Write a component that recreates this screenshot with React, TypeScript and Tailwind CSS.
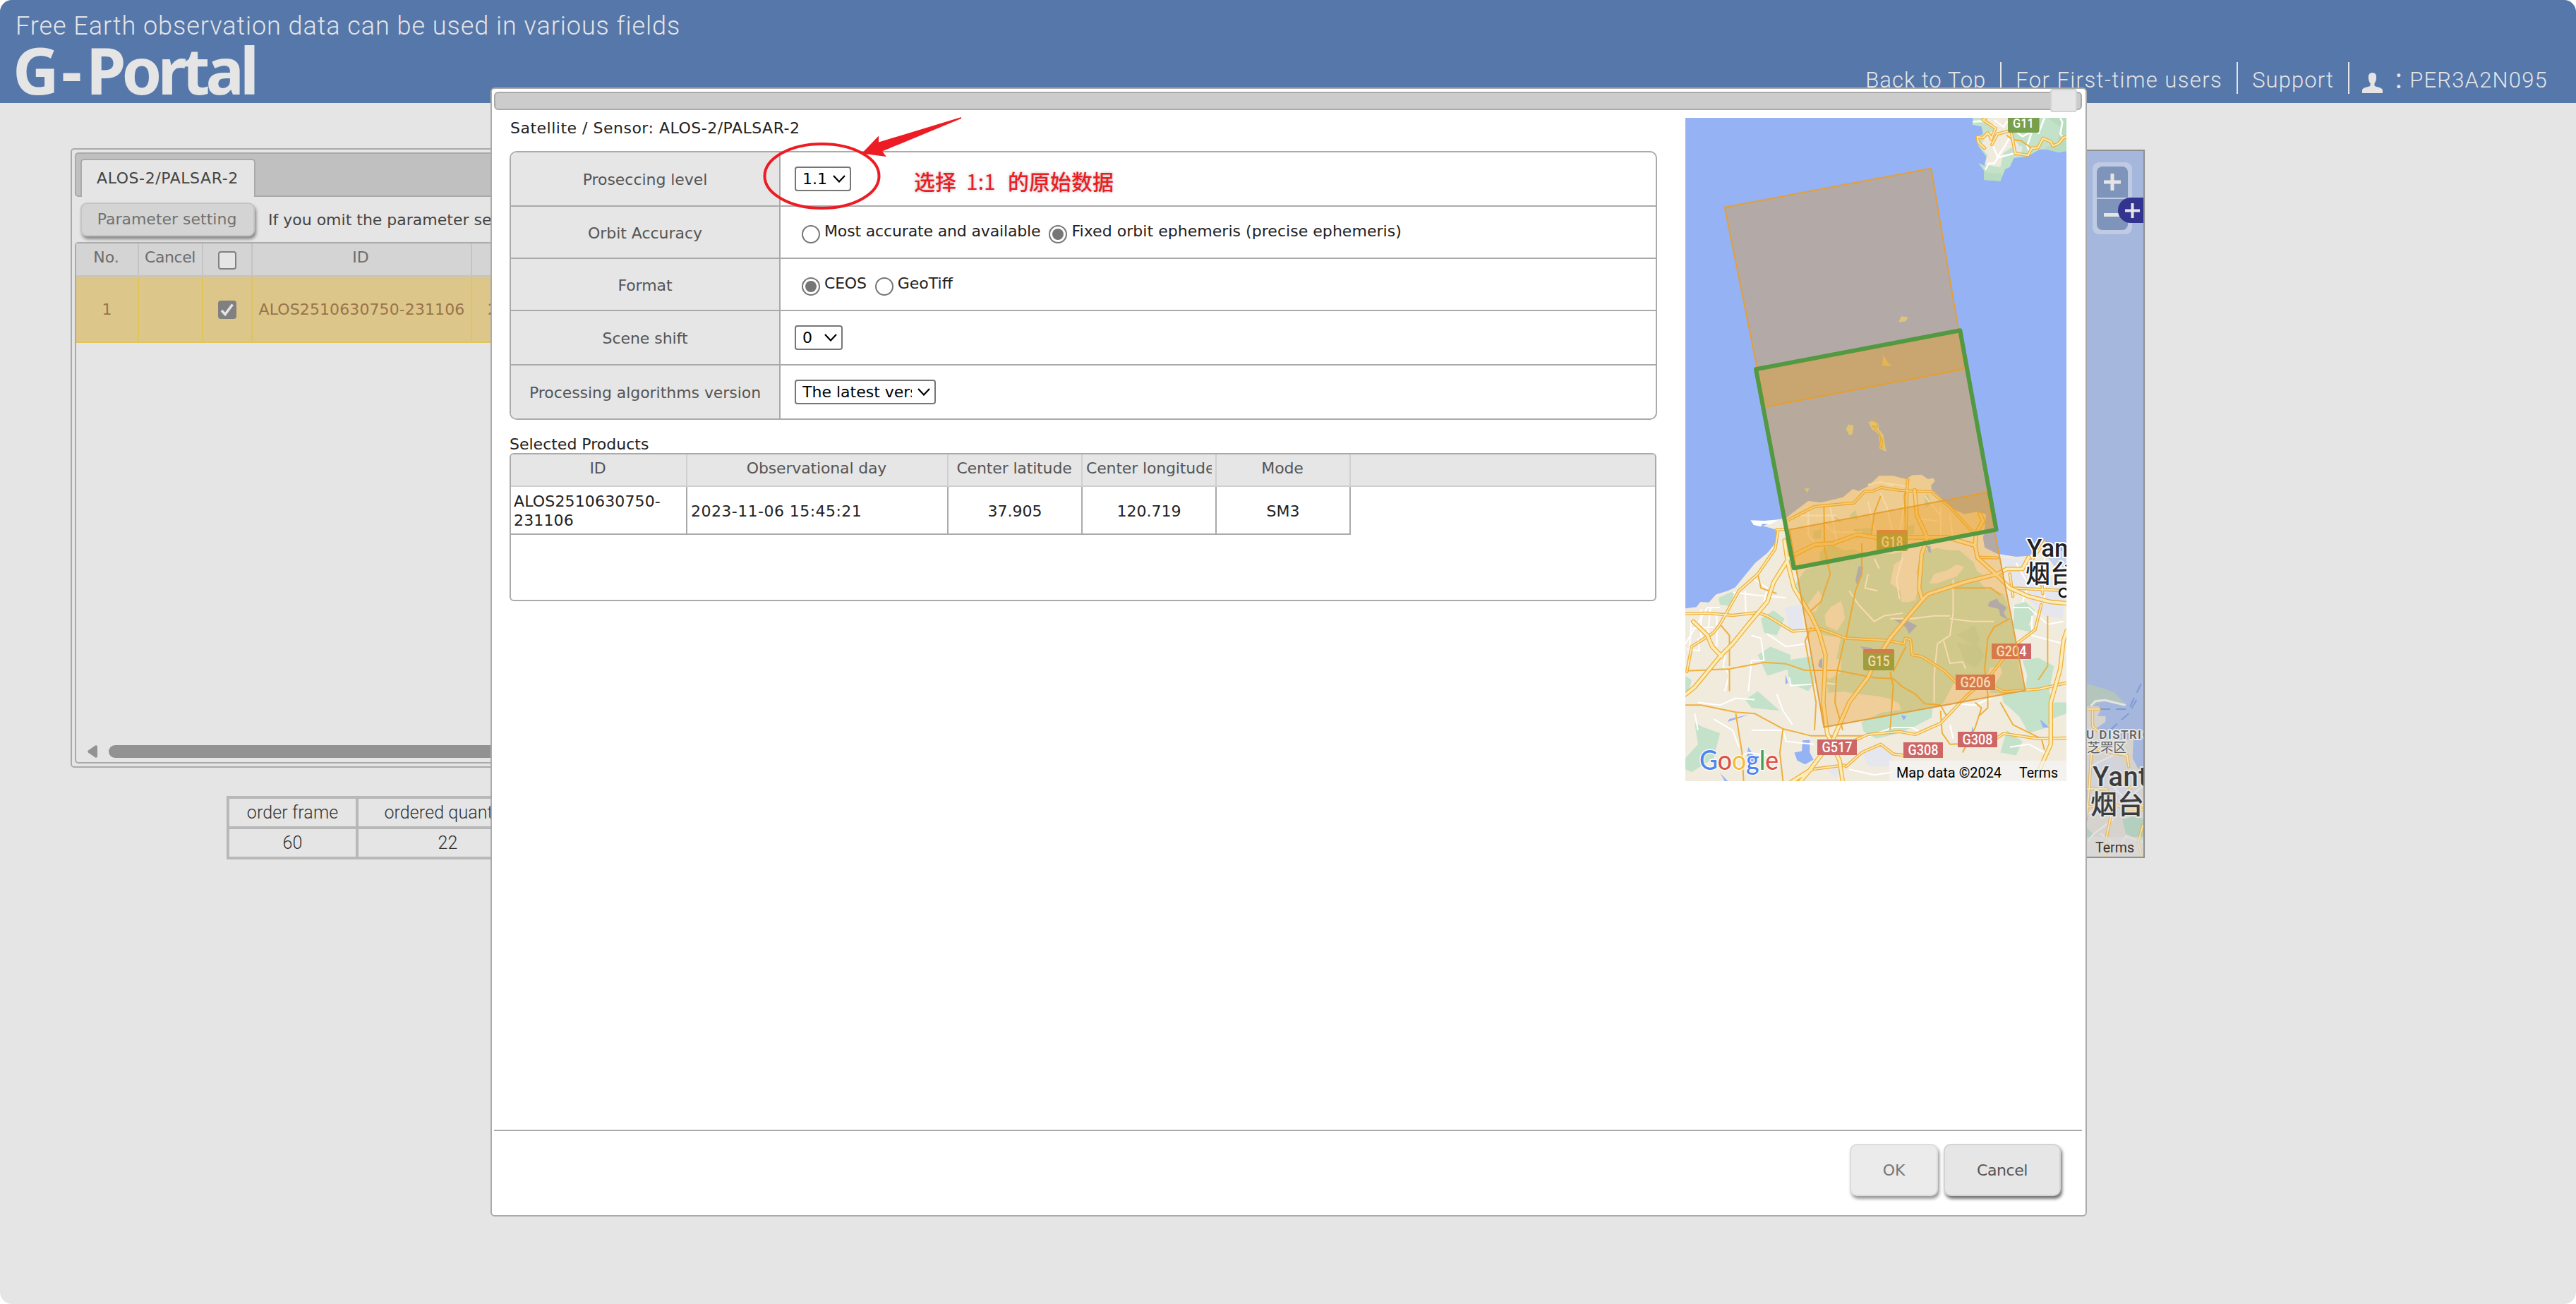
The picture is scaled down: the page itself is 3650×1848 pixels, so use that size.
import type { ReactNode } from 'react';

const VERDANA = "font-['DejaVu_Sans',Verdana,sans-serif] text-[22px]";
const LIGHT = "font-[Roboto,'Noto_Sans_CJK_JP',sans-serif] font-light";

function Header() {
  return (
    <header className="flex h-[146px] justify-between bg-[#5577aa] text-[#e5e5e5]">
      <div className="pl-[22px] pt-[19px]">
        <p className={`${LIGHT} text-[36px] leading-[36px] tracking-[0.95px]`}>
          Free Earth observation data can be used in various fields
        </p>
        <h1 className="-ml-[4px] -mt-[2px] flex gap-[6px] font-['Noto_Sans',sans-serif] text-[91px] font-bold leading-[92px]">
          <span className="-mr-[3px]">G</span>
          <span>-</span>
          <span className="tracking-[-6px]">Portal</span>
        </h1>
      </div>
      <nav className={`${LIGHT} mr-[40px] mt-[88px] flex h-[45px] text-[31px] leading-[51px]`}>
        <span className="pr-[20px] tracking-[1px]">Back to Top</span>
        <span className="border-l-2 border-[#e5e5e5] px-[20px] tracking-[1.4px]">For First-time users</span>
        <span className="border-l-2 border-[#e5e5e5] px-[20px] tracking-[1.1px]">Support</span>
        <span className="flex border-l-2 border-[#e5e5e5] pl-[18px]">
          <svg className="mt-[15px] h-[29px] w-[29px]" viewBox="0 0 29 29" fill="#e5e5e5">
            <path d="M14.5 0C9.500 0 8.500 4 9 8.500c.3 3 1.200 5 2.500 6.500v3.500C9.500 20.500 1 20.500 0 24.500V29h29v-4.500c-1-4-9.500-4-11.500-6V15c1.300-1.500 2.200-3.500 2.500-6.500C20.500 4 19.500 0 14.500 0Z" />
          </svg>
          <span className="w-[38px] pl-[7px] font-['Noto_Sans_CJK_JP',sans-serif] font-normal leading-[49px]">：</span>
          <span className="tracking-[1.2px]">PER3A2N095</span>
        </span>
      </nav>
    </header>
  );
}

function CheckBox({ checked = false }: { checked?: boolean }) {
  return checked ? (
    <span className="flex size-[26px] items-center justify-center rounded-[4px] bg-[#808080]">
      <svg viewBox="0 0 26 26" className="size-[26px]" fill="none" stroke="#e5e5e5" strokeWidth="3.600">
        <path d="M5 14l5 5.500L20.500 5.500" />
      </svg>
    </span>
  ) : (
    <span className="block size-[26px] rounded-[4px] border-2 border-[#808080] bg-[#e5e5e5]" />
  );
}

function OrderPanel() {
  const columns = 'grid grid-cols-[89px_91px_70px_311px_1fr]';
  return (
    <section className="flex h-[878px] w-[1900px] flex-col rounded-[5px] border-2 border-[#aaa] p-[4px]">
      <div className="h-[63px] shrink-0 rounded-[5px] border-2 border-[#aaa] bg-[#c0c0c0] pl-[6px] pt-[7px]">
        <div
          className={`${VERDANA} h-[54px] w-[248px] rounded-t-[5px] border-2 border-b-0 border-[#aaa] bg-[#e5e5e5] pl-[21px] leading-[52px] tracking-[0.58px] text-[#444]`}
        >
          ALOS-2/PALSAR-2
        </div>
      </div>
      <div className="flex h-[64px] shrink-0 gap-[19px] pl-[8px] pt-[8px]">
        <button
          className={`${VERDANA} h-[48px] w-[247px] whitespace-nowrap rounded-[9px] border-2 border-[#c4c4c4] bg-[#d4d4d4] pr-[2px] leading-[44px] text-[#717171] shadow-[2px_4px_4px_rgba(0,0,0,0.4)]`}
        >
          Parameter setting
        </button>
        <span className={`${VERDANA} leading-[50px] text-[#444]`}>
          If you omit the parameter setting, the default value is used.
        </span>
      </div>
      <div className={`${VERDANA} flex grow flex-col rounded-[5px] border-2 border-[#aaa]`}>
        <div className={`${columns} h-[47px] border-b-2 border-[#c4c4c4] bg-[#d4d4d4] text-center leading-[39px] text-[#6c6c6c]`}>
          <span className="border-r-2 border-[#c4c4c4] pr-[2px]">No.</span>
          <span className="border-r-2 border-[#c4c4c4] pr-[1px] tracking-[-0.4px]">Cancel</span>
          <span className="flex justify-center border-r-2 border-[#c4c4c4] pt-[11px]">
            <CheckBox />
          </span>
          <span className="border-r-2 border-[#c4c4c4] pr-[3px]">ID</span>
          <span />
        </div>
        <div className={`${columns} h-[94px] border-b-2 border-[#e0c45c] bg-[#ddc68a] text-center leading-[94px] text-[#98744a]`}>
          <span className="border-r-2 border-[#e0c45c]">1</span>
          <span className="border-r-2 border-[#e0c45c]" />
          <span className="flex justify-center border-r-2 border-[#e0c45c] pt-[34px]">
            <CheckBox checked />
          </span>
          <span className="border-r-2 border-[#e0c45c] tracking-[0.1px]">ALOS2510630750-231106</span>
          <span className="pl-[22px] text-left">2023-11-06 15:45:21</span>
        </div>
        <div className="mt-auto flex items-center gap-[16px] pb-[6px] pl-[16px]">
          <svg viewBox="0 0 14 18" className="h-[18px] w-[14px]" fill="#929292">
            <path d="M1 7.500L11 .5Q14-.5 14 2.500V15.500Q14 18.500 11 17.500L1 10.500Q-.5 9 1 7.500Z" />
          </svg>
          <div className="h-[18px] grow rounded-full bg-[#929292]" />
        </div>
      </div>
    </section>
  );
}

function QuantityTable() {
  return (
    <div
      className={`${LIGHT} ml-[221px] mt-[40px] grid w-[900px] grid-cols-[179px_253px_1fr] gap-[4px] border-4 border-[#b8b8b8] bg-[#b8b8b8] text-center text-[25px] leading-[39px] tracking-[0.1px] text-[#333] *:h-[39px] *:bg-[#e5e5e5]`}
    >
      <span>order frame</span>
      <span>ordered quantity</span>
      <span>remaining quantity</span>
      <span>60</span>
      <span>22</span>
      <span>38</span>
    </div>
  );
}

function Roads({ d, w = 5 }: { d: string; w?: number }) {
  return (
    <g fill="none" strokeLinejoin="round" strokeLinecap="round">
      <path d={d} stroke="#efb03c" strokeWidth={w} vectorEffect="non-scaling-stroke" />
      <path d={d} stroke="#fdecb4" strokeWidth={w - 2.6} vectorEffect="non-scaling-stroke" />
    </g>
  );
}

function Line({ d, c, w = 2 }: { d: string; c: string; w?: number }) {
  return <path d={d} fill="none" stroke={c} strokeWidth={w} strokeLinejoin="round" vectorEffect="non-scaling-stroke" />;
}

function BackgroundMap() {
  return (
    <section className="relative mt-[2px] h-[1004px] w-[902px] border-2 border-[#909090] bg-[#a5b7dd]">
      <svg viewBox="2140 214 898 1000" className="h-full w-full">
        <g transform="translate(2370 600) scale(.4464 .3954)">
          <path d="M1200 925L1315 932 1370 950 1405 965 1440 1005 1435 1014 1370 995 1335 1012 1200 1012Z" fill="#b3c5bd" />
          <path
            d="M1200 1012L1355 1014 1360 1030 1350 1048 1377 1050 1376 1070 1350 1090 1366 1130 1465 1135 1462 1200 1480 1238 1500 1242 1500 1560 1200 1560Z"
            fill="#d6d3ce"
          />
          <path d="M1200 1210L1420 1205 1450 1300 1490 1330 1430 1400 1200 1420Z" fill="#d1d4dc" />
          <path d="M1430 1420L1470 1405 1500 1420 1500 1500 1440 1470Z M1310 1440L1335 1470 1315 1500Z" fill="#b3cfbf" />
          <Line d="M1330 1012L1345 995 1375 992 1440 1010" c="#e4e4e2" w={3} />
          <Line d="M1320 1400L1360 1370 1400 1420 1340 1470 1320 1500M1360 1470L1420 1520 1440 1480 1495 1500M1400 1300L1440 1350 1495 1300M1325 1230L1400 1190" c="#e6e4e4" />
          <g opacity=".75">
            <Roads d="M1300 1024L1358 1024M1335 1030L1335 1085 1360 1110M1300 1160L1340 1165 1400 1180 1445 1190 1450 1230M1332 1170L1325 1300 1315 1420M1315 1310L1380 1310 1400 1360 1440 1385 1495 1385M1460 1300L1430 1350 1495 1370M1315 1375L1400 1370 1380 1480 1375 1550M1495 1440L1480 1500 1490 1550" w={4.400} />
          </g>
          <path d="M1360 1024L1450 1024 1495 920M1390 1100L1450 1040 1475 990" fill="none" stroke="#7f9ad6" strokeWidth="2" strokeDasharray="14 8" vectorEffect="non-scaling-stroke" />
        </g>
        <rect x="2957" y="1186" width="90" height="30" fill="#dcdcdc" opacity=".6" />
        <g stroke="#e5e5e5" strokeWidth="4" paintOrder="stroke" strokeLinejoin="round" className="font-[Roboto,'Noto_Sans_CJK_SC',sans-serif]">
          <text x="2957" y="1047" fontSize="17" fontWeight="500" fill="#5d5f63" letterSpacing="1.500">U DISTRICT</text>
          <text x="2958" y="1066" fontSize="18.700" fill="#5d5f63">芝罘区</text>
          <text x="2966" y="1114" fontSize="38" fontWeight="500" fill="#3c3c3e" letterSpacing="0.600">Yantai</text>
          <text x="2963" y="1153" fontSize="38" fontWeight="500" fill="#3c3c3e">烟台</text>
        </g>
        <text x="2970" y="1208" fontSize="20" textLength="55" lengthAdjust="spacingAndGlyphs" fill="#333" className="font-[Roboto,sans-serif]">Terms</text>
      </svg>
      <div className="absolute left-[826px] top-[16px] flex h-[102px] w-[56px] flex-col gap-[2px] rounded-[9px] bg-[#bfcae3] p-[6px]">
        <span className="flex h-[44px] items-center justify-center rounded-t-[8px] bg-[#7f94bb]">
          <svg viewBox="0 0 24 24" className="size-[24px]" fill="#e5e5e5"><path d="M9.500 0h5v9.500H24v5h-9.500V24h-5v-9.500H0v-5h9.500Z" /></svg>
        </span>
        <span className="flex h-[44px] items-center rounded-b-[8px] bg-[#7f94bb] pl-[10px]">
          <span className="h-[5px] w-[22px] bg-[#e5e5e5]" />
        </span>
      </div>
      <div className="absolute right-0 top-[66px] flex h-[36px] w-[36px] items-center justify-center rounded-l-[18px] bg-[#333390]">
        <svg viewBox="0 0 21 21" className="ml-[4px] size-[21px]" fill="#e5e5e5"><path d="M8.500 0h4v8.500H21v4h-8.500V21h-4v-8.500H0v-4h8.500Z" /></svg>
      </div>
    </section>
  );
}

function Shield({ x, y, w, h, text, green = false }: { x: number; y: number; w: number; h: number; text: string; green?: boolean }) {
  return (
    <g>
      <rect x={x} y={y} width={w} height={h} rx={green ? 3 : 0} fill={green ? '#779f4c' : '#cd6664'} />
      {green && <path d={`M${x} ${y + 5}v-2q0-3 3-3h${w - 6}q3 0 3 3v2Z`} fill="#cd6664" />}
      <text x={x + w / 2} y={y + h - (green ? 6 : 4)} textAnchor="middle" fontSize="20" fontWeight="500" textLength={w - 13} lengthAdjust="spacingAndGlyphs" fill="#fff" className="font-[Roboto,sans-serif]">
        {text}
      </text>
    </g>
  );
}

const GOOGLE: [string, string][] = [
  ['G', '#4f86ee'], ['o', '#dd5044'], ['o', '#f3bd3d'], ['g', '#4f86ee'], ['l', '#3fa35b'], ['e', '#dd5044'],
];

function SceneMap() {
  return (
    <svg viewBox="0 0 540 940" className="h-[940px] w-[540px] shrink-0 bg-[#94b2f4]">
      <g transform="translate(-17.860 -57) scale(.4464 .3333)">
        <path d="M953 171L951 200 980 208 985 240 965 250 970 290 995 335 990 375 970 363 988 395 988 435 1040 440 1055 390 1070 380 1083 342 1125 335 1165 305 1185 305 1225 318 1250 312 1250 171Z" fill="#c3e2c9" />
        <path d="M1190 171L1230 210 1220 280 1180 300 1225 318 1250 312 1250 171Z M1000 405L1045 408 1040 440 988 435 988 400Z" fill="#b8dcc0" />
        <path d="M990 171L1075 171 1070 240 1100 290 1072 300 1050 320 1040 380 990 370 1000 330 975 290 1000 240 1020 220Z" fill="#f1ebde" />
        <path d="M1088 292L1110 292 1108 320 1085 312Z" fill="#e6e7ee" />
        <Line d="M953 187L985 185 1030 208M1020 180L1050 210 1062 185M1015 285L1032 340 1085 322M1032 340L1020 365 1003 365 992 392M1075 240L1055 290 1032 335M1160 240L1180 171M1230 171L1237 190 1230 240 1240 255M1090 230L1110 250 1140 230 1125 290 1130 310" c="#fff" w={2.600} />
        <Line d="M1060 245L1080 265 1105 268 1140 300" c="#efb03c" />
        <Roads d="M1013 285L1030 240 1065 228M1010 262L1025 215 985 180 995 171M990 300L970 275 967 252 985 255 1000 235 1013 260M1075 235L1087 322 1128 330 1140 300 1160 298 1175 258 1200 272 1207 290 1225 280 1240 255 1250 252" w={4.600} />
        <path d="M717 1040L725 1015 747 1018 740 1036Z M665 1225L668 1178 682 1210 697 1227Z M550 1500L557 1475 573 1478 573 1500Z M620 1464L651 1468 654 1500 634 1498Z" fill="#d3dbb0" />
      </g>
      <rect x="457" y="-5" width="44.500" height="26" rx="3" fill="#779f4c" />
      <text x="479" y="14" textAnchor="middle" fontSize="19" fontWeight="500" textLength="30" lengthAdjust="spacingAndGlyphs" fill="#fff" className="font-[Roboto,sans-serif]">G11</text>

      <g transform="translate(-17.860 433) scale(.4464 .3954)">
        <path
          d="M40 663L75 658 88 640 115 642 137 613 175 600 198 588 240 530 262 500 300 465 325 430 332 400 325 380 300 372 285 368 345 343 362 338 375 325 430 278 470 284 540 265 572 235 590 243 620 225 655 188 700 188 740 200 760 186 790 184 810 200 828 196 832 208 820 222 822 238 850 265 875 300 925 325 965 317 995 325 990 375 985 410 990 445 1030 467 1090 478 1130 475 1155 455 1175 422 1190 430 1205 455 1250 460 1250 1290 40 1290Z"
          fill="#f1ebde"
        />
        <path d="M247 347L290 349 330 345 345 342 325 352 310 362 285 360 280 370 257 364Z" fill="#fff" />
        <path d="M550 20L558 6 573 8 570 40 560 42Z M628 -10L652 0 654 20 668 40 678 102 656 90 655 42 630 15Z M419 233L434 233 426 248Z" fill="#d8dcae" />
        <Line d="M630 -15L648 -5 650 15 632 8 655 35 660 50 657 80 664 90 666 60 658 45" c="#efb03c" w={1.300} />
      </g>
      <g transform="translate(-8 503) scale(.35714 .33333)">
        <path
          d="M455 480L500 410 560 395 555 340 600 300 650 330 690 325 720 340 850 345 880 335 880 370 850 390 835 470 875 500 880 550 910 550 935 540 945 490 940 420 960 320 990 330 1020 320 1070 330 1110 330 1165 380 1180 420 1230 450 1270 480 1300 560 1335 740 1350 850 1370 918 1290 938 1230 935 1280 850 1270 820 1230 830 1220 870 1170 900 1090 890 1045 980 980 1010 880 1010 870 980 830 960 790 950 700 940 650 930 590 935 580 880 610 850 640 700 570 690 480 560Z"
          fill="#c3e2c9"
        />
        <path
          d="M990 470L1010 430 1060 415 1100 390 1130 400 1100 440 1020 470Z M1180 450L1250 430 1290 480 1290 520 1230 490 1220 500Z M575 605L600 570 640 545 650 580 655 620 625 672 580 650Z M508 560L550 500 570 530 540 590 520 590Z M500 700L560 670 575 780 545 850 520 790Z M590 800L640 790 640 850 590 880Z"
          fill="#f1ebde"
        />
        <path d="M1170 650L1190 700 1180 740 1140 720 1100 690Z M1100 720L1190 740 1210 780 1170 830 1130 800Z M1380 810L1430 790 1440 830 1400 850Z" fill="#b8dcc0" />
        <path d="M720 1060L800 1020 930 1000 1005 990 1000 1040 930 1080 860 1110 780 1130 730 1100Z M690 240L760 235 760 270 700 280Z M530 250L560 240 560 280 530 280Z M890 230L930 220 930 260 900 265Z M970 100L985 90 1000 130 975 150Z" fill="#c3e2c9" />
      </g>
      <g transform="translate(-17.860 433) scale(.4464 .3954)">
        <path
          d="M1085 650L1120 640 1150 670 1130 720 1145 750 1080 735Z M1110 850L1160 840 1210 870 1195 960 1210 1010 1190 1090 1130 1110 1100 1050 1050 1000 1045 975 1120 955 1125 900Z M145 625L195 600 185 655 150 650Z M280 700L320 670 355 700 330 760 290 750Z M270 830L310 800 375 830 370 880 300 905Z M70 1075L100 1090 150 1110 130 1200 60 1250 40 1240 40 1200 80 1150Z M230 990L270 960 340 1030 250 1020Z M360 850L440 835 450 930 430 960 370 930Z M40 905L60 920 50 960 40 960Z M1180 1000L1250 1000 1250 1040 1200 1060Z M1060 1100L1110 1140 1090 1190 1040 1180Z M560 330L580 310 590 350Z"
          fill="#c3e2c9"
        />
        <path d="M355 660L410 650 415 740 370 740Z M1040 480L1110 490 1140 560 1100 600 1070 560Z M600 1180L650 1150 700 1180 690 1230 620 1230Z M470 1230L530 1220 520 1270Z M1120 560L1240 560 1240 700 1180 690 1120 620Z" fill="#e6e7ee" />
        <path
          d="M412 1136L435 1135 435 1180 447 1205 420 1222 395 1208 386 1180 410 1175Z M590 512L605 512 600 550 585 580 580 560Z M1005 640L1030 628 1035 640 1060 660 1050 680 1065 705 1040 690 1035 665 1000 655Z M700 702L740 705 775 725 750 755 740 730Z M725 1045L742 1050 733 1065Z M150 1253L175 1282 165 1282Z M180 1060L240 1043 220 1052 175 1070Z M240 1160L262 1200 250 1220 235 1190Z M358 900L366 930 358 935Z M465 850L475 840 475 880 462 870Z M1165 1060L1195 1090 1175 1090Z M806 440L818 440 820 465 812 460Z M950 1085L957 1110 948 1115Z M595 800L635 805 620 830Z M510 330L535 355 525 350Z"
          fill="#94b2f4"
        />
        <path d="M1170 425L1240 455 1250 455 1250 520 1210 510 1190 480Z" fill="#a9c1f5" opacity=".6" />
        <Line
          d="M40 790L110 660 150 660M90 665L90 770M120 660L110 770M60 735L130 730M45 810L85 815 80 770M60 700L50 860M140 680L140 800M190 605L260 615 360 625M230 600L232 680M260 560L300 590 290 640M170 800L160 870 180 900 165 960M250 760L280 770 290 850 250 850 240 960M300 755L360 800 420 790M80 1000L150 1010 200 985 260 990M130 1060L190 1100 210 1160M370 910L375 940 440 935M330 970L350 1030 380 1080M250 1100L350 1100 360 1140 450 1150M200 1200L240 1180 300 1190M70 1040L80 1100M560 600L590 650 640 710 670 690 730 680M620 540L610 590 650 600M730 480L710 560 720 630M640 485L655 520M690 700L760 700 830 690 880 690M890 560L890 680 880 760 840 790 830 900 830 1000M880 700L950 710 1020 710M860 780L880 860 920 855 930 880M480 360L510 390 600 390M620 280L640 380M660 250L680 300 700 400M740 250L720 400M400 330L520 330M430 300L430 400 460 440M500 300L520 420M850 300L850 400M880 330L890 420M800 260L850 330M620 220L660 210 700 225M680 215L740 225M1080 660L1130 660 1190 720 1240 710M1140 690L1140 760 1240 790M1010 985L960 1010 900 1005M880 1080L890 1130M600 1130L700 1090 760 1090 790 1110M1070 1160L1130 1150 1180 1180M560 1240L640 1260 700 1250M1090 500L1130 580 1110 640M1130 540L1250 540M1180 480L1180 640M480 930L520 935M770 340L840 350"
          c="#fff"
          w={2}
        />
        <Line
          d="M45 887L180 880 290 857 360 862 420 885 520 885 640 912 700 915 730 945 770 970 800 1005 850 1010 870 1050M180 960L180 880M180 870L180 760 150 720M40 1010L90 1010 200 1035 260 1040 350 1095 440 1120 600 1120M200 1040L220 1180 225 1282M350 1095L340 1180 350 1282M545 775L520 900 515 1000 540 1100M550 770L580 600 600 540 600 430M480 300L482 450 500 540 470 640 430 680M660 260L640 320 630 400M750 200L735 260 740 390M690 890L700 940 690 1100M740 800L700 890M1070 700L1020 730 1000 770 990 880 1000 970M1190 690L1190 870 1160 920M960 1000L980 1020 960 1090 920 1180M850 1030L855 1110 880 1150 1010 1145M1040 1000L1080 1080 1170 1130 1180 1170M270 540L280 590 330 610M1000 970L1000 1020 970 1050M440 730L420 780 455 1000 450 1100M885 590L1010 590 1040 615"
          c="#efb03c"
        />
        <Roads d="M335 380L325 450 270 540 210 600 150 720 130 750 60 800 45 890M330 380L358 380M440 1240L545 1225M550 1230L600 1180 660 1150 700 1185 735 1190M560 1170L580 1135 620 1115 720 1105 770 1115 850 1075 930 980 1010 900 1080 800 1150 740 1170 650M1005 1145L1050 1112 1160 1130 1250 1128M40 682L110 680 190 688 270 678 300 690 380 745 470 737 550 770 680 778 735 790 738 770 755 775 760 830 790 835 860 885 910 940M1020 945L1050 962 1110 957 1165 952 1250 930M1170 560L1175 610M1080 590L1250 600M1070 540L1080 620M360 350L450 298 575 285 610 243 635 243 660 230 720 240 820 245 880 300 960 400M655 410L740 400 745 200M965 480L1030 482M1180 425L1140 490" w={4.400} />
        <Roads
          d="M40 972L70 945 150 835 190 790 240 720 300 640 320 570 370 480 450 435 510 430 585 398 650 410 800 408 870 408 960 438M355 420L365 500 385 590 440 690 465 750 485 830 478 1000 490 1110 530 1210 540 1290M400 1290L430 1250 510 1130 560 1000 620 910 640 860 690 770 790 635 810 612 930 568 1030 540 1060 522 1110 522 1130 480M790 625L782 590 790 470 808 410 775 330 768 240M962 400L960 440 968 482 1030 545 1070 590 1130 620 1200 640 1250 645M960 400L985 350 975 325M1145 1290L1200 1150 1200 1000 1230 880 1240 780 1250 745M65 710L110 760 125 800 155 835M370 1290L440 1240"
          w={6.400}
        />
      </g>

      <Shield x={271} y={584} w={44} h={30} text="G18" green />
      <Shield x={252} y={753} w={44} h={30} text="G15" green />
      <Shield x={434} y={745} w={56} h={22} text="G204" />
      <Shield x={383} y={789} w={56} h={22} text="G206" />

      <g fill="rgb(236 154 30 / 0.36)" stroke="#e39f3a" strokeWidth="2">
        <path d="M55.800 126.700L348.200 71.700 396.400 355.700 112.900 409.700Z" />
        <path d="M147.300 583.600L427.700 530.700 481.700 811.400 196.400 863.600Z" />
        <path d="M100 356.300L389.300 301.300 440.600 583.600 153.600 638.200Z" fill="rgb(235 158 28 / 0.4)" stroke="#529942" strokeWidth="6" strokeLinejoin="round" />
      </g>

      <Shield x={386} y={870} w={56} h={22} text="G308" />
      <Shield x={309} y={885} w={56} h={22} text="G308" />
      <Shield x={187} y={881} w={56} h={22} text="G517" />

      <g stroke="#fff" strokeWidth="4" paintOrder="stroke" strokeLinejoin="round" fill="#202124" fontWeight="500" className="font-[Roboto,'Noto_Sans_CJK_SC',sans-serif]">
        <text x="484" y="622" fontSize="35">Yantai</text>
        <text x="482" y="659" fontSize="35">烟台</text>
      </g>
      <circle cx="536" cy="673" r="6" fill="#fff" stroke="#111" strokeWidth="2.500" />
      <path d="M289 911h251v29h-251Z" fill="#f5f5f5" opacity=".7" />
      <g fontSize="20" fill="#000" className="font-[Roboto,sans-serif]">
        <text x="299" y="935" textLength="149" lengthAdjust="spacingAndGlyphs">Map data ©2024</text>
        <text x="473" y="935" textLength="55" lengthAdjust="spacingAndGlyphs">Terms</text>
      </g>
      <text x="20" y="924" fontSize="38" fontWeight="500" textLength="112" lengthAdjust="spacingAndGlyphs" stroke="#fff" strokeWidth="2.500" paintOrder="stroke" className="font-[Lato,sans-serif]">
        {GOOGLE.map(([ch, color], i) => (
          <tspan key={i} fill={color}>{ch}</tspan>
        ))}
      </text>
    </svg>
  );
}

function Select({ children, className }: { children: ReactNode; className: string }) {
  return (
    <span className={`${className} flex h-[35px] items-center rounded-[4px] border-2 border-[#767676] bg-white pl-[9px] pr-[6px] text-black`}>
      <span className="min-w-0 grow overflow-hidden whitespace-nowrap leading-[31px]">{children}</span>
      <svg viewBox="0 0 18 11" className="ml-[8px] h-[11px] w-[18px] shrink-0" fill="none" stroke="#000" strokeWidth="2.200">
        <path d="M1 1l8 8.500L17 1" />
      </svg>
    </span>
  );
}

function Radio({ checked = false, children, className = '' }: { checked?: boolean; children: ReactNode; className?: string }) {
  return (
    <span className={`flex items-center gap-[6px] whitespace-nowrap ${className}`}>
      <span className="mt-[6px] flex size-[26px] items-center justify-center rounded-full border-2 border-[#767676]">
        {checked && <span className="size-[16px] rounded-full bg-[#767676]" />}
      </span>
      <span className="-mt-[4px]">{children}</span>
    </span>
  );
}

function FormRow({ label, className, children }: { label: string; className: string; children: ReactNode }) {
  return (
    <div className={`flex border-b-2 border-[#aaa] last:border-b-0 ${className}`}>
      <div className="flex w-[382px] shrink-0 items-center justify-center border-r-2 border-[#aaa] bg-[#e6e6e6] pt-[2px] tracking-[-0.05px] text-[#555]">{label}</div>
      <div className="flex grow items-center pl-[20px]">{children}</div>
    </div>
  );
}

function ParameterForm() {
  return (
    <div className="mt-[17px] h-[381px] w-[1626px] overflow-hidden rounded-[10px] border-2 border-[#aaa]">
      <FormRow label="Proseccing level" className="h-[77px]">
        <Select className="w-[80px]">1.1</Select>
        <span className="ml-[89px] mt-[5px] flex font-['Noto_Sans_CJK_SC',sans-serif] text-[30px] font-medium leading-[34px] text-[#ed1c24] [text-shadow:0_0_4px_#bbb]">
          选择<span className="ml-[14px] mr-[16px] w-[43px] font-normal">1:1</span>的原始数据
        </span>
      </FormRow>
      <FormRow label="Orbit Accuracy" className="h-[74px]">
        <Radio className="pl-[10px] tracking-[-0.15px]">Most accurate and available</Radio>
        <Radio checked className="pl-[12px] tracking-[0.04px]">Fixed orbit ephemeris (precise ephemeris)</Radio>
      </FormRow>
      <FormRow label="Format" className="h-[74px]">
        <Radio checked className="pl-[10px] tracking-[-0.2px]">CEOS</Radio>
        <Radio className="pl-[12px]">GeoTiff</Radio>
      </FormRow>
      <FormRow label="Scene shift" className="h-[77px]">
        <Select className="w-[68px]">0</Select>
      </FormRow>
      <FormRow label="Processing algorithms version" className="h-[75px]">
        <Select className="w-[200px]">The latest version</Select>
      </FormRow>
    </div>
  );
}

function ProductsTable() {
  const columns = 'grid grid-cols-[250px_370px_190px_190px_190px_1fr]';
  return (
    <div className="h-[210px] w-[1625px] overflow-hidden rounded-[6px] border-2 border-[#aaa]">
      <div className={`${columns} h-[46px] border-b-2 border-[#d0d0d0] bg-[#e6e6e6] text-center leading-[40px] tracking-[-0.15px] text-[#555] *:border-r-2 *:border-[#d0d0d0] *:pr-[2px] [&>:last-child]:border-r-0`}>
        <span>ID</span>
        <span>Observational day</span>
        <span>Center latitude</span>
        <span className="pl-[5px]"><span className="mr-[3px] block overflow-hidden whitespace-nowrap text-left">Center longitude</span></span>
        <span>Mode</span>
        <span />
      </div>
      <div className={`${columns} h-[68px] text-center *:flex *:items-center *:border-b-2 *:border-r-2 *:border-[#aaa] *:pt-[2px] [&>:last-child]:border-0`}>
        <span className="pl-[4px] text-left leading-[27px] tracking-[0.15px]">ALOS2510630750-<br />231106</span>
        <span className="pl-[5px] tracking-[0.45px]">2023-11-06 15:45:21</span>
        <span className="justify-center">37.905</span>
        <span className="justify-center">120.719</span>
        <span className="justify-center">SM3</span>
        <span />
      </div>
    </div>
  );
}

function Annotation() {
  return (
    <svg viewBox="1070 150 310 160" className="pointer-events-none absolute left-[373px] top-[24px] h-[160px] w-[310px]" fill="none">
      <ellipse cx="1164.500" cy="249.500" rx="81" ry="45.500" stroke="#ed1c24" strokeWidth="4" />
      <path d="M1362 166L1245 201.500 1245 192.500 1221 217.500 1256 222 1250 214.500 1362 168Z" fill="#ed1c24" />
    </svg>
  );
}

function ParameterDialog() {
  return (
    <div className={`${VERDANA} absolute left-[695px] top-[124px] flex h-[1600px] w-[2262px] flex-col rounded-[6px] border-2 border-[#aaa] bg-white text-[#222]`}>
      <div className="ml-[3px] mr-[5px] mt-[4px] flex h-[26px] justify-end rounded-[6px] border-2 border-[#aaa] bg-[#ccc] pr-[5px]">
        <span className="-mt-[6px] h-[33px] w-[38px] rounded-[4px] border-2 border-[#d3d3d3] bg-[#e6e6e6]" />
      </div>
      <div className="flex grow justify-between pl-[25px] pr-[27px] pt-[11px]">
        <div>
          <p className="pl-[1px] leading-[30px] tracking-[0.5px]">Satellite / Sensor: ALOS-2/PALSAR-2</p>
          <ParameterForm />
          <p className="mt-[23px] leading-[24px]">Selected Products</p>
          <ProductsTable />
        </div>
        <SceneMap />
      </div>
      <div className="ml-[3px] mr-[5px] flex h-[121px] justify-end gap-[8px] border-t-2 border-[#aaa] pr-[30px] pt-[18px]">
        <button className="h-[74px] w-[125px] rounded-[10px] border-2 border-[#dcdcdc] bg-[#ebebeb] text-[#777] shadow-[2px_4px_4px_rgba(0,0,0,0.4)]">OK</button>
        <button className="h-[74px] w-[166px] rounded-[10px] border-2 border-[#d3d3d3] bg-[#e6e6e6] tracking-[-0.4px] text-[#555] shadow-[2px_4px_4px_rgba(0,0,0,0.55)]">Cancel</button>
      </div>
      <Annotation />
    </div>
  );
}

export default function App() {
  return (
    <div className="relative h-[1848px] w-full overflow-hidden rounded-[17px] bg-[#e5e5e5]">
      <Header />
      <main className="flex justify-between pl-[100px] pr-[611px] pt-[64px]">
        <div>
          <OrderPanel />
          <QuantityTable />
        </div>
        <BackgroundMap />
      </main>
      <ParameterDialog />
    </div>
  );
}
